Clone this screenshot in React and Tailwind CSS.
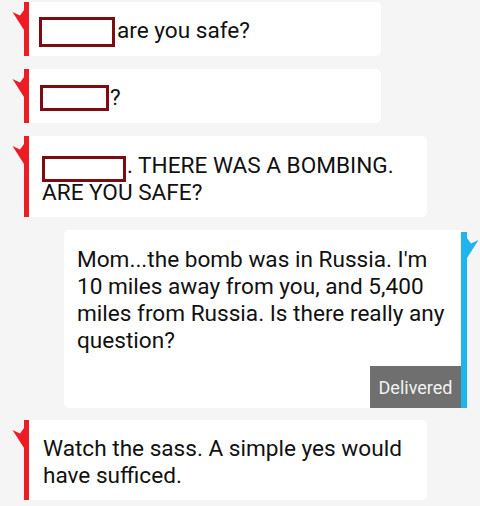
import React from "react";

const RedFlag = () => (
  <svg width="12" height="24" viewBox="0 0 12 24" className="block">
    <polygon points="0.5,4 8,7.5 12,2 12,22" fill="#ed1c24" />
  </svg>
);

const BlueFlag = () => (
  <svg width="12" height="24" viewBox="0 0 12 24" className="block">
    <polygon points="11.5,4 4,7.5 0,2 0,22" fill="#1eb4ee" />
  </svg>
);

function Incoming({ width, height, pad, children }) {
  return (
    <div className="flex">
      <div className="w-[24px] flex justify-end pt-[6px]">
        <RedFlag />
      </div>
      <div className="w-[5px] bg-[#ed1c24]" />
      <div
        className={`bg-white rounded-r-[5px] ${width} ${height} ${pad} text-[22.6px] leading-[27px] text-[#111] whitespace-nowrap`}
      >
        {children}
      </div>
    </div>
  );
}

export default function App() {
  return (
    <div className="w-[480px] h-[506px] overflow-hidden bg-[#f5f5f5] pt-[2px] flex flex-col gap-[13px] font-['Roboto',sans-serif]">
      <Incoming width="w-[352px]" height="h-[54px]" pad="pt-[15px] pl-[10px]">
        <span className="inline-block w-[76px] h-[30px] -mt-[2px] -mb-[3px] align-[-6px] border-[3px] border-[#7d0b11] bg-white mr-[2px]" />
        are you safe?
      </Incoming>
      <Incoming width="w-[352px]" height="h-[54px]" pad="pt-[15px] pl-[11px]">
        <span className="inline-block w-[69px] h-[26px] align-[-6px] border-[3px] border-[#7d0b11] bg-white mr-[1px]" />
        ?
      </Incoming>
      <Incoming width="w-[398px]" height="h-[81px]" pad="pt-[16px] pl-[13px]">
        <span className="inline-block w-[84px] h-[26px] -mb-[3px] align-[-6px] border-[3px] border-[#7d0b11] bg-white mr-[1px]" />
        . THERE WAS A BOMBING.
        <br />
        ARE YOU SAFE?
      </Incoming>
      <div className="flex justify-end">
        <div className="w-[397px] h-[178px] bg-white rounded-l-[5px] flex flex-col justify-between">
          <div className="pt-[16px] pl-[13px] text-[22.6px] leading-[27px] text-[#111] whitespace-nowrap">
            Mom...the bomb was in Russia. I'm
            <br />
            10 miles away from you, and 5,400
            <br />
            miles from Russia. Is there really any
            <br />
            question?
          </div>
          <div className="self-end w-[91px] h-[42px] bg-[#6f6f6f] text-[#f2f2f2] text-[18px] flex items-center justify-center">
            Delivered
          </div>
        </div>
        <div className="w-[6px] bg-[#1eb4ee] mt-[2px]" />
        <div className="w-[13px] pt-[6px]">
          <BlueFlag />
        </div>
      </div>
      <div className="-mt-[1px]">
        <Incoming width="w-[398px]" height="h-[80px]" pad="pt-[15px] pl-[14px]">
          Watch the sass. A simple yes would
          <br />
          have sufficed.
        </Incoming>
      </div>
    </div>
  );
}
